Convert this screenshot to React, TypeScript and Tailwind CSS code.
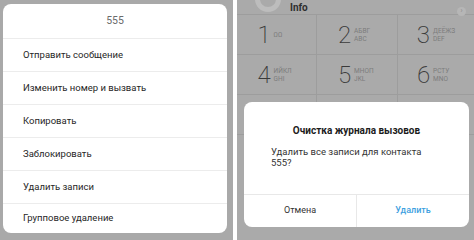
import React from 'react';

const menuItems = [
    'Отправить сообщение',
    'Изменить номер и вызвать',
    'Копировать',
    'Заблокировать',
    'Удалить записи',
    'Групповое удаление',
];

const keys = [
    { digit: '1', top: 'ΩΩ', bottom: '' },
    { digit: '2', top: 'АБВГ', bottom: 'ABC' },
    { digit: '3', top: 'ДЕЁЖЗ', bottom: 'DEF' },
    { digit: '4', top: 'ИЙКЛ', bottom: 'GHI' },
    { digit: '5', top: 'МНОП', bottom: 'JKL' },
    { digit: '6', top: 'РСТУ', bottom: 'MNO' },
    { digit: '', top: '', bottom: '' },
    { digit: '', top: '', bottom: '' },
    { digit: '', top: '', bottom: '' },
];

const ContextMenu: React.FC = () => (
    <div className="w-[233px] h-full bg-[#a9a9a9] pl-[3px] pt-[4px] pr-[6px] pb-[7px]">
        <div className="h-full bg-white rounded-[8px] flex flex-col overflow-hidden">
            <div className="h-[34px] flex items-center justify-center text-[10.5px] text-[#6b6b6b]">555</div>
            {menuItems.map((item, i) => (
                <div
                    key={item}
                    className={`h-[33px] flex items-center pl-[20px] text-[9.5px] text-[#262626] border-t border-[#ececec] ${i === menuItems.length - 1 ? 'flex-1' : ''}`}
                >
                    {item}
                </div>
            ))}
        </div>
    </div>
);

const Dialer: React.FC = () => (
    <div className="relative w-[237px] h-full bg-[#aaaaaa] overflow-hidden">
        <div className="h-[15px] flex items-center border-b border-[#9d9d9d] relative">
            <div className="absolute left-[18px] top-[-14px] w-[26px] h-[26px] rounded-full border-[5px] border-[#bdbdbd]" />
            <span className="ml-[53px] text-[10px] font-bold text-[#2e2e2e]">Info</span>
            <div className="absolute right-[8px] top-[7px] w-[9px] h-[9px] rounded-full bg-[#b6b6b6] text-[7px] leading-[9px] text-center text-[#8a8a8a]">›</div>
        </div>
        <div className="grid grid-cols-[80px_81px_76px]">
            {keys.map((k, i) => (
                <div
                    key={i}
                    className={`h-[40px] flex items-center justify-center gap-[3px] border-b border-[#9d9d9d] ${i % 3 !== 2 ? 'border-r' : ''}`}
                >
                    {k.digit && (
                        <>
                            <span className="text-[24px] font-extralight leading-none text-[#3a3a3a]">{k.digit}</span>
                            <div className="flex flex-col text-[6.5px] leading-[8px] text-[#7c7c7c] min-w-[22px]">
                                <span>{k.top}</span>
                                <span>{k.bottom}</span>
                            </div>
                        </>
                    )}
                </div>
            ))}
        </div>
        <div className="absolute left-[7px] right-[5px] top-[102px] h-[125px] bg-white rounded-[8px] flex flex-col">
            <div className="pt-[21px] text-center text-[10px] font-bold text-[#1c1c1c]">Очистка журнала вызовов</div>
            <div className="mt-[8px] pl-[27px] pr-[30px] text-[9.5px] leading-[11px] text-[#333333]">
                Удалить все записи для контакта 555?
            </div>
            <div className="mt-auto h-[33px] flex border-t border-[#e8e8e8]">
                <div className="flex-1 flex items-center justify-center text-[9px] text-[#333333] border-r border-[#e8e8e8]">Отмена</div>
                <div className="flex-1 flex items-center justify-center text-[9px] font-medium text-[#3d9fe0]">Удалить</div>
            </div>
        </div>
    </div>
);

const App: React.FC = () => (
    <div className="w-[474px] h-[240px] flex gap-[4px] bg-white font-['Roboto',sans-serif]">
        <ContextMenu />
        <Dialer />
    </div>
);

export default App;
